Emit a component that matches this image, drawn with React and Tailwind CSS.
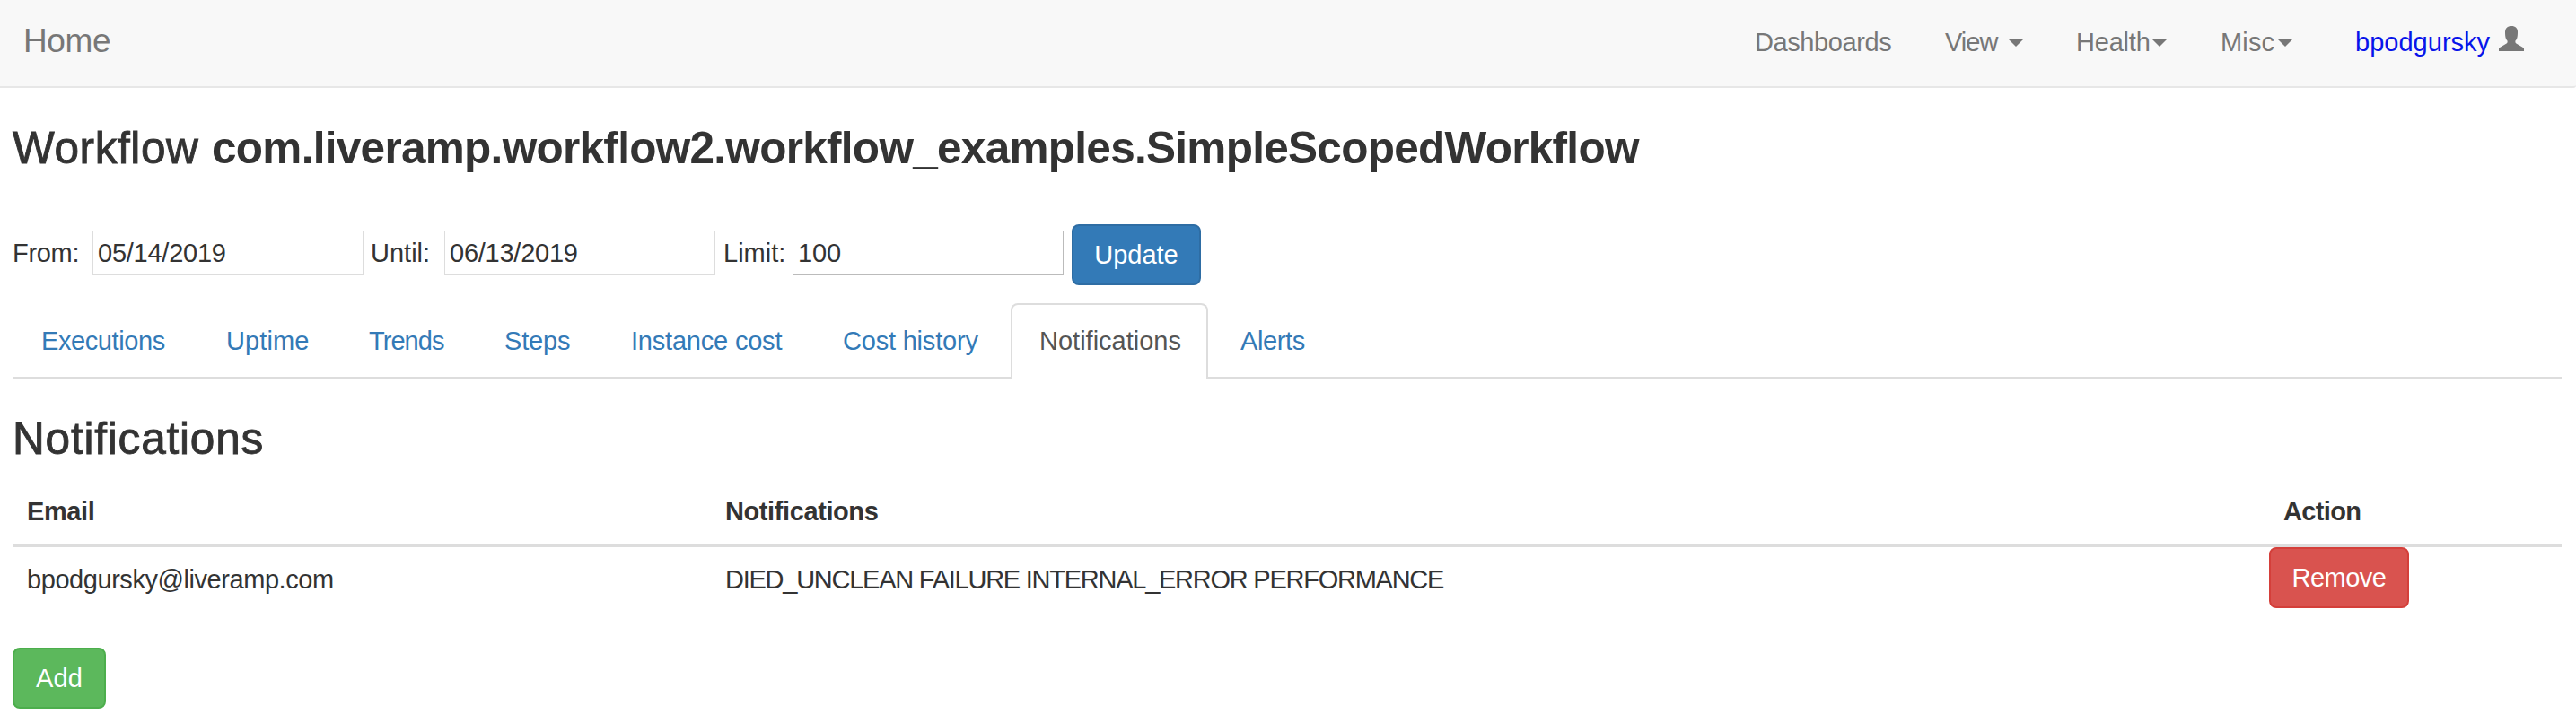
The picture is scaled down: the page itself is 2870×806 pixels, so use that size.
const Caret = () => (
  <svg viewBox="0 0 16 8" className="mt-[2px] h-2 w-4 shrink-0 fill-[#777]">
    <path d="M0 0h16L8 8z" />
  </svg>
);

const UserIcon = () => (
  <svg viewBox="0 0 28 28" className="h-7 w-7 shrink-0 fill-[#777]">
    <path d="M14 0c4.500 0 7 2.600 7 6.500 0 3-.2 5.500-.9 7.500-.5 1.500-1.700 1.900-1.700 3v.8c0 .8.3 1.300 1 1.700l7.200 4.200c1 .6 1.400 1 1.400 1.900V28H0v-2.400c0-.9.4-1.300 1.400-1.900l7.200-4.200c.7-.4 1-.9 1-1.700V17c0-1.100-1.200-1.500-1.700-3C7.200 12 7 9.500 7 6.500 7 2.600 9.500 0 14 0z" />
  </svg>
);

const tabs = [
  { label: "Executions", box: "w-[205px] pl-[32px] tracking-[-0.4px]" },
  { label: "Uptime", box: "w-[159px] pl-[33px] tracking-[0.1px]" },
  { label: "Trends", box: "w-[151px] pl-[33px] tracking-[-0.95px]" },
  { label: "Steps", box: "w-[140px] pl-[33px] tracking-[-0.15px]" },
  { label: "Instance cost", box: "w-[237px] pl-[34px] tracking-[-0.2px]" },
  { label: "Cost history", box: "w-[220px] pl-[33px] tracking-[-0.2px]" },
  { label: "Notifications", box: "w-[220px] pl-[30px] tracking-[0px]", active: true },
  { label: "Alerts", box: "w-[140px] pl-[36px] tracking-[-0.4px]" },
];

function Navbar() {
  return (
    <nav className="flex h-[98px] items-start rounded-br-[3px] border-b-2 border-[#e7e7e7] bg-[#f8f8f8] pr-[58px] pl-[26px] text-[#777]">
      <a className="pt-[26px] text-[37px] leading-10 tracking-[-0.4px]">Home</a>
      <div className="mt-[27px] ml-auto flex h-10 items-center">
        <a className="w-[212px] tracking-[-0.4px]">Dashboards</a>
        <a className="flex w-[146px] items-center">
          <span className="w-[71px] tracking-[-0.95px]">View</span>
          <Caret />
        </a>
        <a className="flex w-[161px] items-center">
          <span className="w-[85px] tracking-[-0.2px]">Health</span>
          <Caret />
        </a>
        <a className="flex w-[150px] items-center">
          <span className="w-[64px] tracking-[0.15px]">Misc</span>
          <Caret />
        </a>
        <a className="flex items-center">
          <span className="w-[160px] tracking-[0.02px] text-[#0814ea]">bpodgursky</span>
          <span className="-mt-[9px]">
            <UserIcon />
          </span>
        </a>
      </div>
    </nav>
  );
}

function FilterForm() {
  return (
    <form className="mt-[42px] flex h-[68px] items-center">
      <label className="-mt-1 w-[89px] tracking-[-0.3px]">From:</label>
      <input
        className="-mt-1 h-[50px] w-[302px] border border-[#ddd] pl-[5px] tracking-[-0.25px]"
        defaultValue="05/14/2019"
      />
      <label className="-mt-1 ml-2 w-[82px] tracking-[0px]">Until:</label>
      <input
        className="-mt-1 h-[50px] w-[302px] border border-[#ddd] pl-[5px] tracking-[-0.25px]"
        defaultValue="06/13/2019"
      />
      <label className="-mt-1 ml-[9px] w-[77px] tracking-[0px]">Limit:</label>
      <input
        className="-mt-1 h-[50px] w-[302px] border border-[#bbb] pl-[5px] tracking-[-0.1px]"
        defaultValue="100"
      />
      <button
        type="button"
        className="ml-[9px] h-[68px] w-[144px] rounded-lg border-2 border-[#2e6da4] bg-[#337ab7] tracking-[0px] text-white"
      >
        Update
      </button>
    </form>
  );
}

export default function App() {
  return (
    <div className="min-h-[806px] w-full bg-white font-['Liberation_Sans',Arial,sans-serif] text-[29px] leading-10 text-[#333]">
      <Navbar />
      <main className="pr-4 pl-[14px]">
        <h2 className="flex pt-[41px] text-[49.5px] leading-[52px]">
          <span className="w-[222px] tracking-[0.6px] whitespace-nowrap [-webkit-text-stroke:0.9px_#333]">
            Workflow
          </span>
          <span className="font-bold tracking-[-0.71px]">
            com.liveramp.workflow2.workflow_examples.SimpleScopedWorkflow
          </span>
        </h2>
        <div className="h-[17px]" />
        <FilterForm />
        <ul className="mt-[20px] flex h-[84px] border-b-2 border-[#ddd]">
          {tabs.map((t) => (
            <li
              key={t.label}
              className={
                t.active
                  ? `${t.box} h-[84px] rounded-t-lg border-2 border-b-0 border-[#ddd] bg-white pt-[20px] text-[#555]`
                  : `${t.box} pt-[22px] text-[#337ab7]`
              }
            >
              {t.label}
            </li>
          ))}
        </ul>
        <h2 className="pt-[41px] text-[49.5px] leading-[52px] tracking-[0.8px] [-webkit-text-stroke:0.9px_#333]">
          Notifications
        </h2>
        <table className="mt-[19px] w-full table-fixed border-collapse text-left">
          <colgroup>
            <col className="w-[777px]" />
            <col className="w-[1737px]" />
            <col />
          </colgroup>
          <thead>
            <tr className="h-[74px] border-b-4 border-[#ddd] align-top">
              <th className="pt-4 pl-4 font-bold tracking-[-0.4px]">Email</th>
              <th className="pt-4 pl-[17px] font-bold tracking-[-0.4px]">Notifications</th>
              <th className="pt-4 pl-4 font-bold tracking-[-0.65px]">Action</th>
            </tr>
          </thead>
          <tbody>
            <tr className="align-top">
              <td className="pt-4 pl-4 tracking-[-0.44px]">bpodgursky@liveramp.com</td>
              <td className="pt-4 pl-[17px] tracking-[-1.25px]">
                DIED_UNCLEAN FAILURE INTERNAL_ERROR PERFORMANCE
              </td>
              <td>
                <button
                  type="button"
                  className="block h-[68px] w-[156px] rounded-lg border-2 border-[#d43f3a] bg-[#d9534f] tracking-[-0.5px] text-white"
                >
                  Remove
                </button>
              </td>
            </tr>
          </tbody>
        </table>
        <button
          type="button"
          className="mt-[44px] block h-[68px] w-[104px] rounded-lg border-2 border-[#4cae4c] bg-[#5cb85c] tracking-[0.2px] text-white"
        >
          Add
        </button>
      </main>
    </div>
  );
}
